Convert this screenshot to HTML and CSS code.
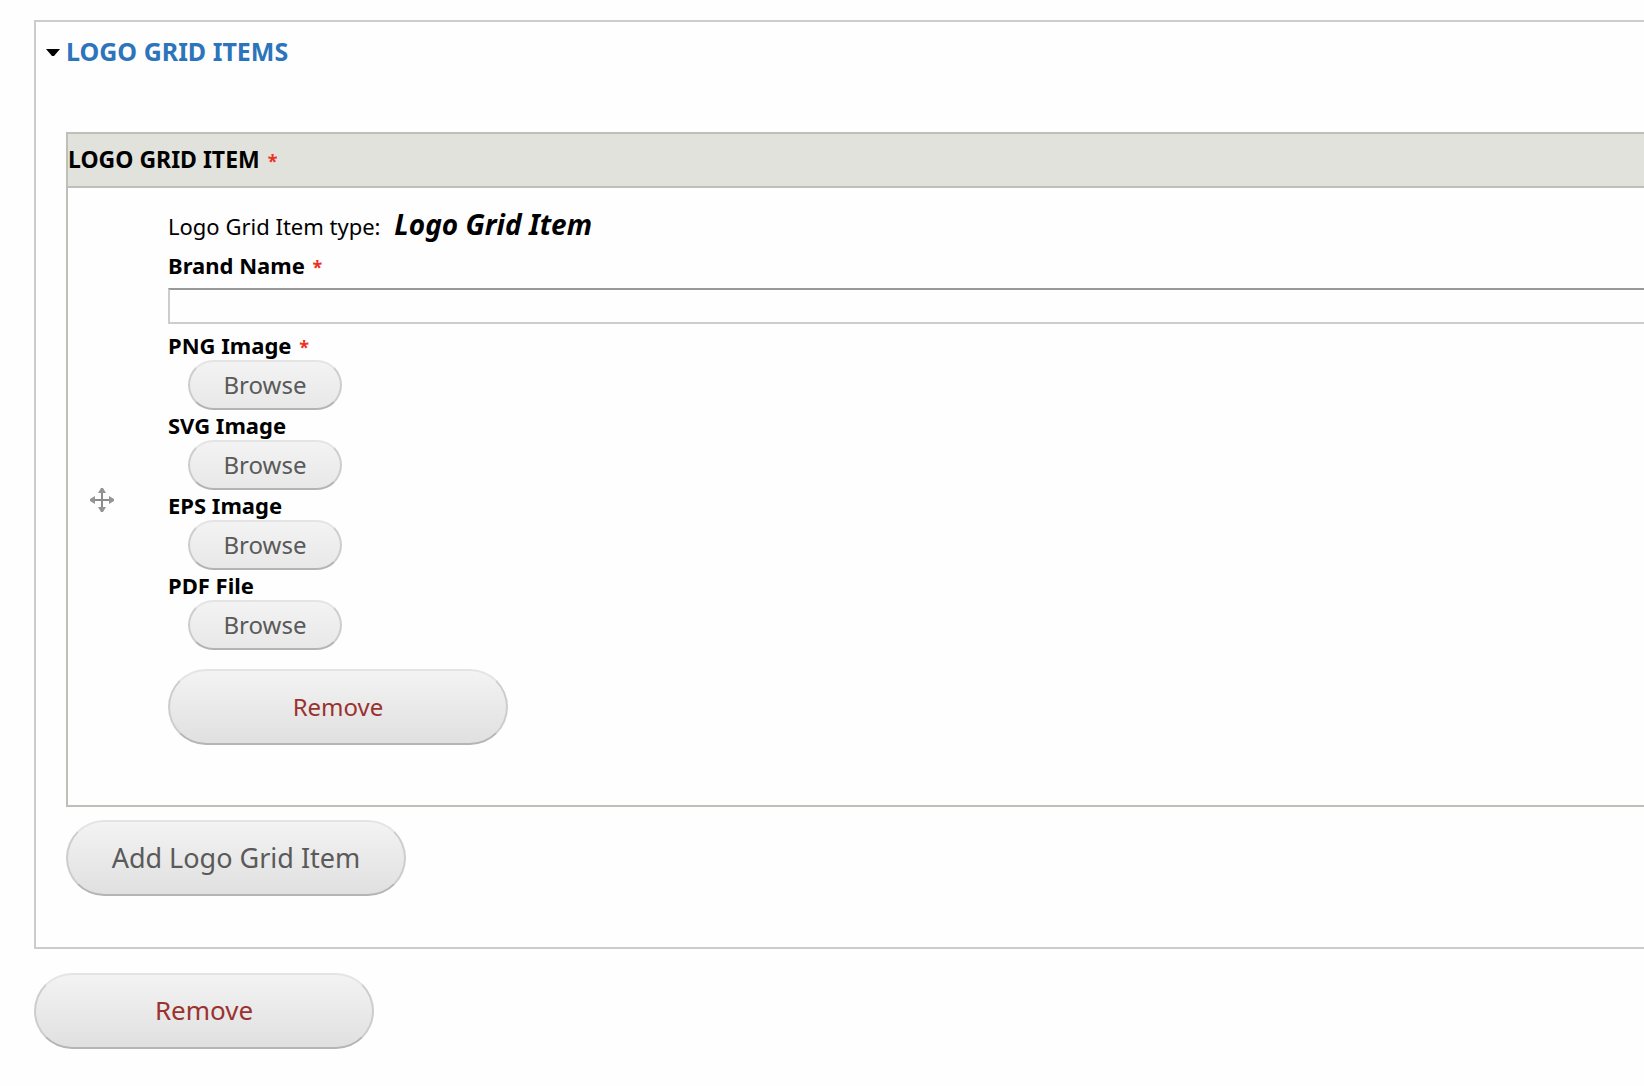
FILE: index.html
```html
<!DOCTYPE html>
<html lang="en">
<head>
<meta charset="utf-8">
<title>Logo Grid Items</title>
<link rel="stylesheet" href="styles.css">
</head>
<body>
<form class="form">
  <details class="group" open>
    <summary class="group-title">
      <svg class="arrow" width="14" height="12" viewBox="0 0 14 12" aria-hidden="true"><path d="M0 4H14L8 11H6Z"/></svg>
      <a class="group-link" href="#items">LOGO GRID ITEMS</a>
    </summary>
    <table class="items" id="items">
      <thead>
        <tr><th class="items-head" colspan="2">LOGO GRID ITEM <span class="required">*</span></th></tr>
      </thead>
      <tbody>
        <tr>
          <td class="handle-cell">
            <svg class="handle" width="26" height="26" viewBox="0 0 26 26" role="img" aria-label="Drag to re-order">
              <path class="handle-line" d="M13 3V23M3 13H23"/>
              <path class="handle-head" d="M12 1H14L17 6H9ZM12 25H14L17 20H9ZM1 12V14L6 17V9ZM25 12V14L20 17V9Z"/>
            </svg>
          </td>
          <td class="item-cell">
            <p class="type">Logo Grid Item type: <em class="type-name">Logo Grid Item</em></p>
            <label class="label" for="brand">Brand Name <span class="required">*</span></label>
            <input class="text-input" id="brand" type="text" required>
            <div class="file">
              <span class="label" id="png">PNG Image <span class="required">*</span></span>
              <button class="button button-small" type="button" aria-describedby="png">Browse</button>
            </div>
            <div class="file">
              <span class="label" id="svg">SVG Image</span>
              <button class="button button-small" type="button" aria-describedby="svg">Browse</button>
            </div>
            <div class="file">
              <span class="label" id="eps">EPS Image</span>
              <button class="button button-small" type="button" aria-describedby="eps">Browse</button>
            </div>
            <div class="file">
              <span class="label" id="pdf">PDF File</span>
              <button class="button button-small" type="button" aria-describedby="pdf">Browse</button>
            </div>
            <button class="button button-remove button-item" type="button">Remove</button>
          </td>
        </tr>
      </tbody>
    </table>
    <button class="button button-add" type="button">Add Logo Grid Item</button>
  </details>
  <button class="button button-remove" type="button">Remove</button>
</form>
</body>
</html>
```

FILE: styles.css
```css
* {
  box-sizing: border-box;
}

body {
  margin: 0;
  background: #fefefe;
  color: #000;
  font-family: "Lucida Grande", "Noto Sans", sans-serif;
  font-size: 22px;
  line-height: 26px;
}

.form {
  padding: 20px 0 36px 34px;
}

.group {
  margin-bottom: 24px;
  padding: 11px 0 51px 30px;
  border: 2px solid #ccc;
  border-right: 0;
}

.group-title {
  display: flex;
  align-items: center;
  gap: 6px;
  margin: 0 0 63px -20px;
  font-size: 25px;
  font-weight: bold;
  line-height: 36px;
  list-style: none;
}

.group-link {
  color: #2c74bb;
  text-decoration: none;
}

.items {
  width: 100%;
  margin-bottom: 13px;
  border: 2px solid #bebfb9;
  border-right: 0;
  border-spacing: 0;
}

.items-head {
  height: 54px;
  padding: 0 0 2px;
  border-bottom: 2px solid #bebfb9;
  background: #e1e2dc;
  font-size: 23px;
  text-align: left;
}

.required {
  margin-left: 2px;
  color: #ee3124;
  font-size: 18px;
  line-height: 1;
}

.handle-cell {
  width: 100px;
  padding: 6px 0 0 21px;
  vertical-align: middle;
}

.handle {
  display: block;
}

.handle-line {
  fill: none;
  stroke: #8c8c8c;
  stroke-width: 2;
}

.handle-head {
  fill: #949494;
}

.item-cell {
  padding: 20px 0 60px;
}

.type {
  margin: 0 0 8px;
  line-height: 36px;
}

.type-name {
  margin-left: 8px;
  font-size: 28px;
  font-weight: bold;
  line-height: 1;
}

.label {
  display: block;
  padding-bottom: 2px;
  font-weight: bold;
}

.text-input {
  display: block;
  width: 100%;
  height: 36px;
  margin: 8px 0;
  padding: 0 8px;
  border: 2px solid #ccc;
  border-top-color: #999;
  border-right: 0;
  background: #fefefe;
  font: inherit;
}

.file {
  margin-bottom: 2px;
}

.button {
  display: block;
  width: 340px;
  height: 76px;
  padding: 0 0 2px;
  border: 2px solid #cdcdcd;
  border-top-color: #e4e4e4;
  border-bottom-color: #b4b4b4;
  border-radius: 38px;
  background: linear-gradient(#f3f3f3, #e0e0e0);
  color: #5a5a5a;
  font-family: inherit;
  font-size: 26px;
}

.button-small {
  width: 154px;
  height: 50px;
  margin-left: 20px;
  border-radius: 25px;
  background: linear-gradient(#f3f3f3, #e8e8e8);
  font-size: 24px;
}

.button-add {
  font-size: 27px;
}

.button-remove {
  color: #9a3230;
}

.button-item {
  margin-top: 19px;
  font-size: 24px;
}
```
